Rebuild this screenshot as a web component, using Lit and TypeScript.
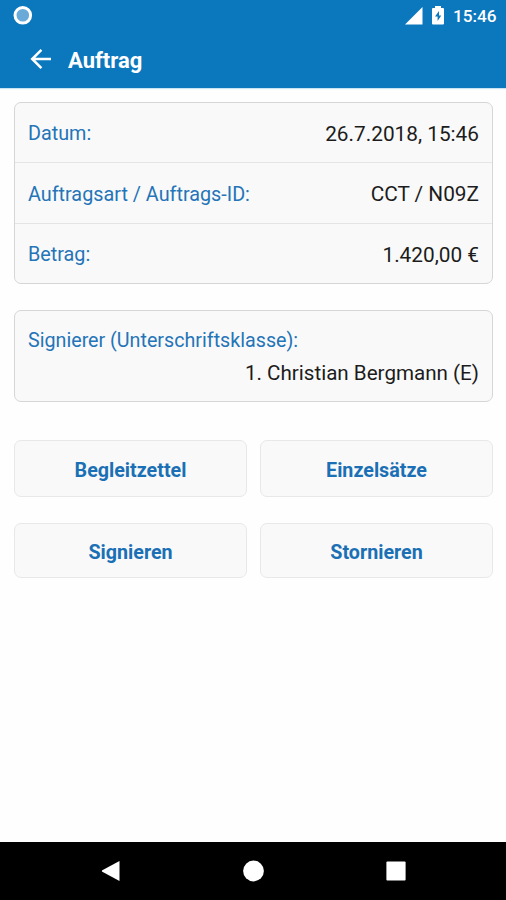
import { LitElement, html, css } from "lit";
import { customElement } from "lit/decorators.js";

const details = [
  { label: "Datum:", value: "26.7.2018, 15:46" },
  { label: "Auftragsart / Auftrags-ID:", value: "CCT / N09Z" },
  { label: "Betrag:", value: "1.420,00 €" },
];
const actions = ["Begleitzettel", "Einzelsätze", "Signieren", "Stornieren"];

@customElement("app-root")
export class AppRoot extends LitElement {
  static styles = css`
    :host {
      display: flex;
      flex-direction: column;
      height: 900px;
      box-sizing: border-box;
      background: #fefefe;
      font-family: Roboto, "Liberation Sans", sans-serif;
      color: #1c1c1c;
      overflow: hidden;
    }
    * { box-sizing: border-box; }
    svg { display: block; }
    .header { height: 88px; background: #0b77bd; color: #fff; flex: none; box-shadow: 0 1px 1px #c9e3f2; }
    .status { height: 32px; display: flex; align-items: center; padding: 0 10px 0 13px; }
    .signal { margin-left: auto; }
    .battery { margin-left: 9px; }
    .clock { margin-left: 9px; width: 43px; font-size: 17.2px; font-weight: 500; line-height: 32px; white-space: nowrap; }
    .bar { height: 56px; display: flex; align-items: center; padding-left: 30px; }
    .title { margin: 2px 0 0 16px; font-size: 22px; line-height: 28px; font-weight: 700; }
    .bar svg { margin-top: -2px; }
    .content { flex: 1; padding: 14px 13px 0 14px; }
    .card { background: #f9f9f9; border: 1px solid #d6d6d6; border-radius: 7px; }
    .details { display: grid; grid-template-rows: 59px 61px 60px; }
    .row { padding: 2px 13px 0; display: flex; align-items: center; justify-content: space-between; }
    .row + .row { border-top: 1px solid #e5e5e5; }
    .label { color: #2474b8; font-size: 19.8px; line-height: 24px; }
    .row .label { margin-top: 1px; }
    .value { font-size: 20.8px; line-height: 26px; }
    .signer { margin-top: 26px; height: 92px; padding: 18px 13px 0; }
    .signer .label { font-size: 19.7px; }
    .signer .value { text-align: right; margin-top: 7px; font-size: 20.6px; }
    .actions { margin-top: 38px; display: grid; grid-template: 57px 55px / 1fr 1fr; gap: 26px 13px; }
    .action { border: 1px solid #e8e8e8; border-radius: 7px; background: #f9f9f9; color: #1b70b5;
      font: 700 19.7px/24px Roboto, "Liberation Sans", sans-serif; padding: 4px 0 0; }
    .nav { height: 58px; flex: none; background: #000; display: flex; justify-content: space-between; align-items: center; padding: 0 100px 0 101px; }
  `;

  render() {
    return html`
      <header class="header">
        <div class="status">
          <svg width="20" height="20" viewBox="0 0 20 20"><circle cx="9.8" cy="9.3" r="7.8" fill="#6aaad9" stroke="#fff" stroke-width="3"/></svg>
          <svg class="signal" width="18" height="18" viewBox="0 0 18 18"><path d="M17.5 0v17.5H0z" fill="#fff"/></svg>
          <svg class="battery" width="12" height="20" viewBox="0 0 12 20"><path d="M3 0h6v2H11a1 1 0 0 1 1 1V17.500a1 1 0 0 1-1 1H1a1 1 0 0 1-1-1V3a1 1 0 0 1 1-1h2z" fill="#fff"/><path d="M7 5 3 10.500h2.600v4.500L9.300 9.500H7z" fill="#0b77bd"/></svg>
          <span class="clock">15:46</span>
        </div>
        <div class="bar">
          <svg width="22" height="22" viewBox="0 0 22 22"><path d="M21 11H2.500M11.400 1.800 2.200 11l9.200 9.200" fill="none" stroke="#fff" stroke-width="2.500"/></svg>
          <span class="title">Auftrag</span>
        </div>
      </header>
      <main class="content">
        <section class="card details">
          ${details.map((d) => html`<div class="row"><span class="label">${d.label}</span><span class="value">${d.value}</span></div>`)}
        </section>
        <section class="card signer">
          <div class="label">Signierer (Unterschriftsklasse):</div>
          <div class="value">1. Christian Bergmann (E)</div>
        </section>
        <div class="actions">
          ${actions.map((a) => html`<button class="action">${a}</button>`)}
        </div>
      </main>
      <nav class="nav">
        <svg width="20" height="22" viewBox="0 0 20 22"><path d="M18.500 1v20L1.300 11.700a.8.8 0 0 1 0-1.400z" fill="#fff"/></svg>
        <svg width="22" height="22" viewBox="0 0 22 22"><circle cx="10.500" cy="11" r="10.400" fill="#fff"/></svg>
        <svg width="20" height="20" viewBox="0 0 20 20"><rect x=".4" y=".4" width="19.200" height="19.200" rx="1" fill="#fff"/></svg>
      </nav>
    `;
  }
}
